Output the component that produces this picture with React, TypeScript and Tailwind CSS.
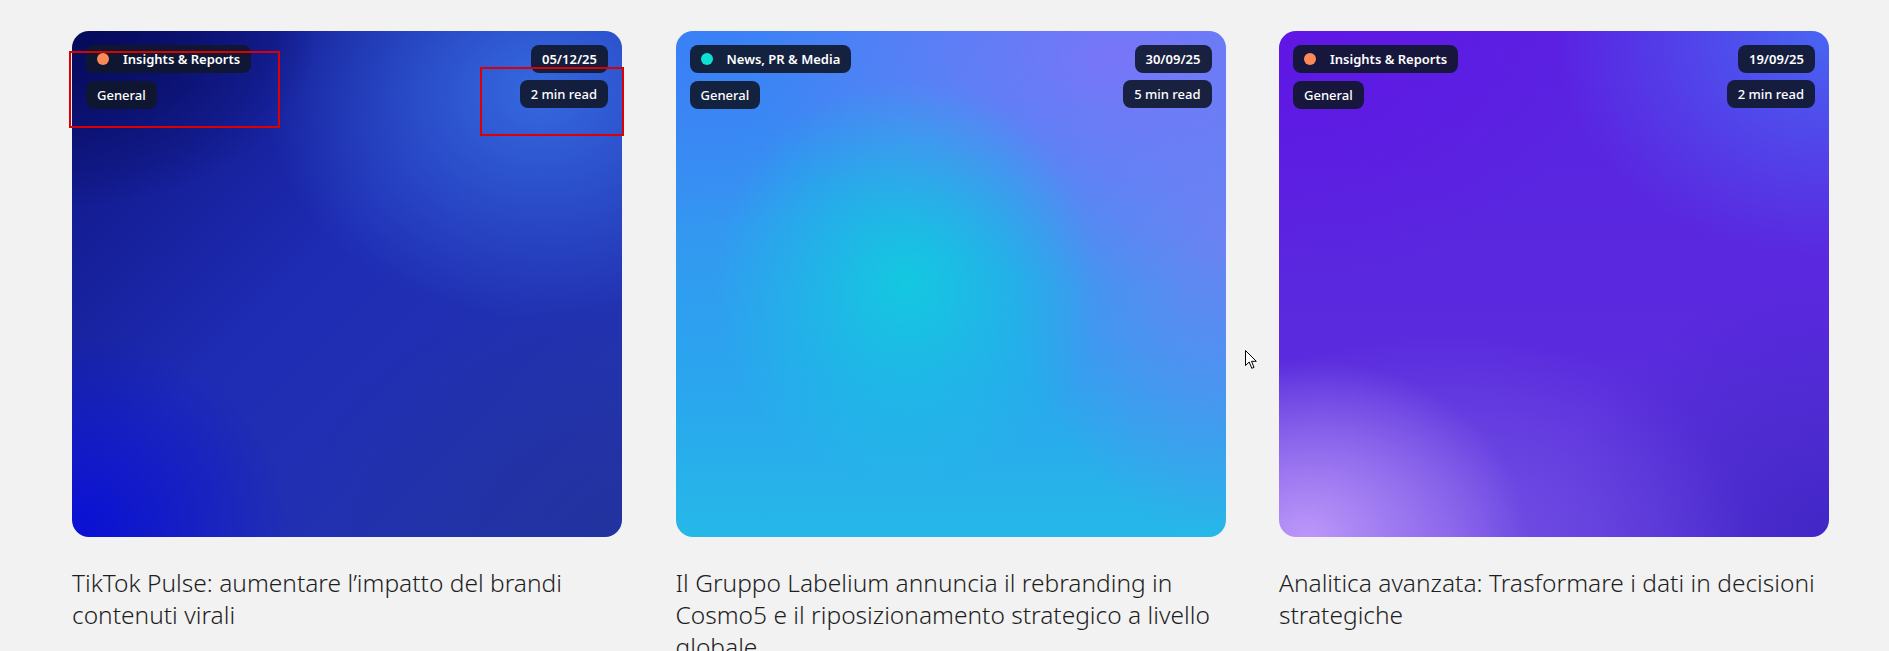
import React from "react";

type Card = {
  category: string;
  dot: string;
  date: string;
  read: string;
  title: string;
  bg: string;
};

const cards: Card[] = [
  {
    category: "Insights & Reports",
    dot: "bg-[#fb8a58]",
    date: "05/12/25",
    read: "2 min read",
    title: "TikTok Pulse: aumentare l\u2019impatto del brandi contenuti virali",
    bg: "bg-[radial-gradient(ellipse_45%_35%_at_0%_0%,#060a58_0%,transparent_100%),radial-gradient(ellipse_50%_45%_at_85%_12%,#3569de_0%,transparent_100%),radial-gradient(ellipse_40%_40%_at_0%_100%,#0a0fd6_0%,transparent_100%),radial-gradient(ellipse_60%_50%_at_100%_100%,#22329e_0%,transparent_100%),linear-gradient(135deg,#0d137e_0%,#1e2cb4_45%,#2436b0_100%)]",
  },
  {
    category: "News, PR & Media",
    dot: "bg-[#0fe0d6]",
    date: "30/09/25",
    read: "5 min read",
    title: "Il Gruppo Labelium annuncia il rebranding in Cosmo5 e il riposizionamento strategico a livello globale",
    bg: "bg-[radial-gradient(ellipse_35%_40%_at_42%_50%,#14c8e0_0%,transparent_100%),radial-gradient(ellipse_65%_45%_at_80%_5%,#7876f8_0%,transparent_100%),radial-gradient(ellipse_40%_60%_at_100%_40%,#6a84f2_0%,transparent_100%),radial-gradient(ellipse_50%_40%_at_0%_0%,#3a80f6_0%,transparent_100%),linear-gradient(180deg,#3f86f4_0%,#2aa6ee_70%,#26b8e8_100%)]",
  },
  {
    category: "Insights & Reports",
    dot: "bg-[#fb8a58]",
    date: "19/09/25",
    read: "2 min read",
    title: "Analitica avanzata: Trasformare i dati in decisioni strategiche",
    bg: "bg-[radial-gradient(ellipse_40%_35%_at_5%_100%,#bc98fa_0%,transparent_100%),radial-gradient(ellipse_55%_40%_at_30%_100%,#7450e4_0%,transparent_100%),radial-gradient(ellipse_50%_45%_at_100%_0%,#4866f2_0%,transparent_100%),radial-gradient(ellipse_50%_50%_at_100%_100%,#4226c6_0%,transparent_100%),radial-gradient(ellipse_60%_50%_at_0%_0%,#6016e4_0%,transparent_100%),linear-gradient(180deg,#5a22e2_0%,#5a2ade_60%,#5c38dc_100%)]",
  },
];

function Badge({ children }: { children: React.ReactNode }) {
  return (
    <div className="flex h-7 items-center rounded-lg bg-slate-900/90 px-[11px] text-[13px] leading-none text-white">
      {children}
    </div>
  );
}

function CardView({ c }: { c: Card }) {
  return (
    <div className="flex flex-col">
      <div className={`relative h-[506px] w-full rounded-[17px] ${c.bg}`}>
        <div className="flex items-start justify-between p-[14px]">
          <div className="flex flex-col items-start gap-2">
            <Badge>
              <span className={`mr-[14px] h-3 w-3 rounded-full ${c.dot}`} />
              <span className="font-semibold">{c.category}</span>
            </Badge>
            <Badge>
              <span className="font-medium">General</span>
            </Badge>
          </div>
          <div className="flex flex-col items-end gap-[7px]">
            <Badge>
              <span className="font-semibold">{c.date}</span>
            </Badge>
            <Badge>
              <span className="font-medium">{c.read}</span>
            </Badge>
          </div>
        </div>
      </div>
      <h3 className="mt-[30px] font-['Noto_Sans',sans-serif] text-[24.5px] font-light leading-[32px] text-[#1e1e1e]">
        {c.title}
      </h3>
    </div>
  );
}

export default function App() {
  return (
    <div className="relative min-h-screen bg-[#f2f2f2] font-['Noto_Sans',sans-serif]">
      <div className="grid grid-cols-3 gap-x-[53.5px] pl-[72px] pr-[60px] pt-[31px]">
        {cards.map((c, i) => (
          <CardView key={i} c={c} />
        ))}
      </div>

      {/* annotation boxes */}
      <div className="pointer-events-none absolute left-[69px] top-[51px] h-[77px] w-[211px] border-2 border-[#dc0000]" />
      <div className="pointer-events-none absolute left-[480px] top-[67px] h-[69px] w-[144px] border-2 border-[#dc0000]" />

      {/* mouse cursor */}
      <svg
        className="pointer-events-none absolute left-[1245px] top-[350px]"
        width="13"
        height="20"
        viewBox="0 0 13 20"
      >
        <path
          d="M0.5 0.5 L0.5 15.5 L4.2 12 L6.8 18.3 L9 17.4 L6.5 11.3 L11.3 11.3 Z"
          fill="#ffffff"
          stroke="#000000"
          strokeWidth="1"
          strokeLinejoin="miter"
        />
      </svg>
    </div>
  );
}
